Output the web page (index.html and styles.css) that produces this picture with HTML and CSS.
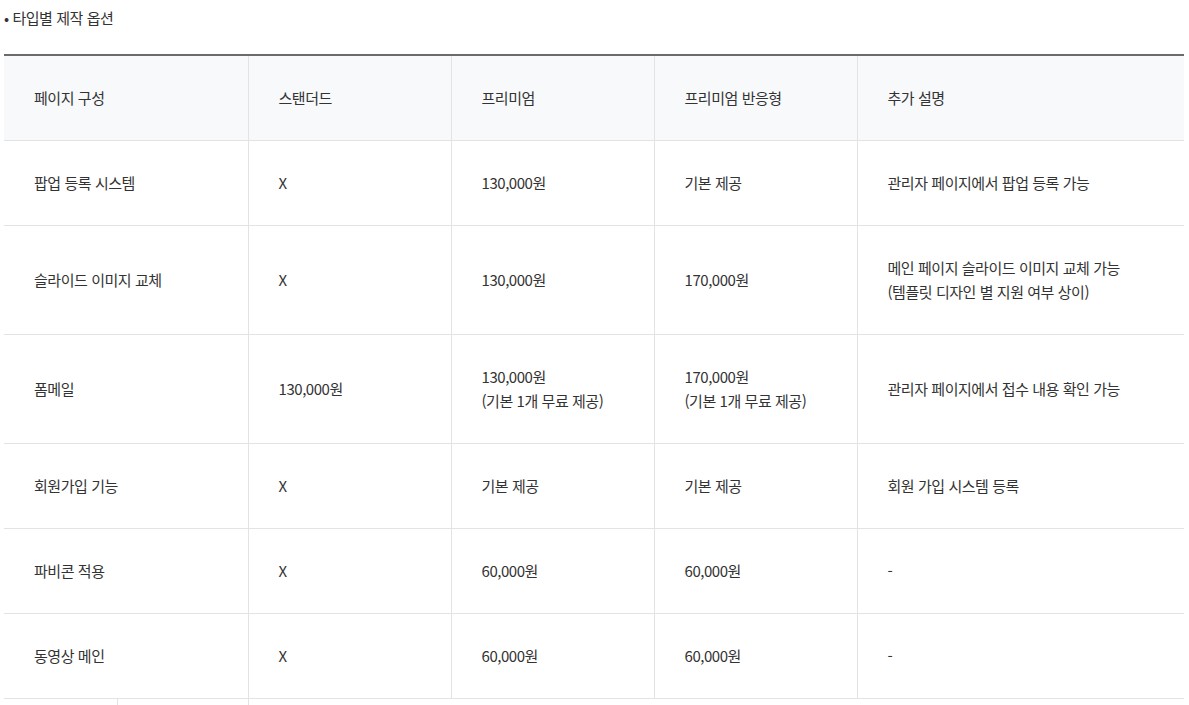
FILE: index.html
```html
<!DOCTYPE html>
<html lang="ko">
<head>
<meta charset="utf-8">
<link rel="stylesheet" href="styles.css">
</head>
<body>
<div class="wrap">
  <p class="title">• 타입별 제작 옵션</p>
  <table class="opt">
    <colgroup>
      <col class="c1"><col class="c2"><col class="c3"><col class="c4"><col class="c5">
    </colgroup>
    <thead>
      <tr><th>페이지 구성</th><th>스탠더드</th><th>프리미엄</th><th>프리미엄 반응형</th><th>추가 설명</th></tr>
    </thead>
    <tbody>
      <tr><td>팝업 등록 시스템</td><td>X</td><td>130,000원</td><td>기본 제공</td><td>관리자 페이지에서 팝업 등록 가능</td></tr>
      <tr><td>슬라이드 이미지 교체</td><td>X</td><td>130,000원</td><td>170,000원</td><td>메인 페이지 슬라이드 이미지 교체 가능<br>(템플릿 디자인 별 지원 여부 상이)</td></tr>
      <tr><td>폼메일</td><td>130,000원</td><td>130,000원<br>(기본 1개 무료 제공)</td><td>170,000원<br>(기본 1개 무료 제공)</td><td>관리자 페이지에서 접수 내용 확인 가능</td></tr>
      <tr><td>회원가입 기능</td><td>X</td><td>기본 제공</td><td>기본 제공</td><td>회원 가입 시스템 등록</td></tr>
      <tr><td>파비콘 적용</td><td>X</td><td>60,000원</td><td>60,000원</td><td>-</td></tr>
      <tr><td>동영상 메인</td><td>X</td><td>60,000원</td><td>60,000원</td><td>-</td></tr>
    </tbody>
  </table>
  <div class="next">
    <div class="n1"></div><div class="n2"></div><div class="n3"></div>
  </div>
</div>
</body>
</html>
```
FILE: styles.css
```css
html, body { margin: 0; padding: 0; background: #fff; }
body {
  font-family: "Noto Sans CJK KR", "Noto Sans", sans-serif;
  font-size: 15px;
  color: #333;
  letter-spacing: -0.45px;
}
.wrap { padding: 0 5px 0 4px; }
.title { margin: 0; padding-top: 6px; line-height: 24px; height: 48px; }
.opt {
  width: 100%;
  border-collapse: collapse;
  border-top: 2px solid #6b6b6b;
  table-layout: fixed;
}
.c1 { width: 244px; }
.c2, .c3, .c4 { width: 203px; }
.opt th, .opt td {
  text-align: left;
  font-weight: normal;
  padding: 30px;
  line-height: 24px;
  vertical-align: middle;
  border-bottom: 1px solid #e3e3e3;
  border-left: 1px solid #e3e3e3;
}
.opt th:first-child, .opt td:first-child { border-left: none; }
.opt thead th { background: #f8f9fb; }
.next { display: flex; height: 20px; }
.n1 { width: 113px; border-right: 1px solid #e3e3e3; }
.n2 { width: 130px; border-right: 1px solid #e3e3e3; }
.n3 { flex: 1; }
```
